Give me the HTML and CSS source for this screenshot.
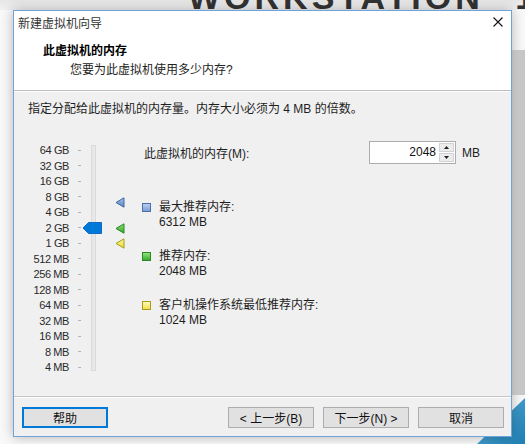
FILE: index.html
```html
<!DOCTYPE html>
<html lang="zh-CN">
<head>
<meta charset="utf-8">
<title>新建虚拟机向导</title>
<link rel="stylesheet" href="styles.css">
</head>
<body>
<div class="desk">
  <div class="brand">WORKSTATION<span class="tm">™</span> 10 <span class="pro">PRO</span></div>
  <div class="bg-right"></div>
  <div class="bg-corner"></div>

  <div class="dialog">
    <div class="titlebar">
      <span class="title">新建虚拟机向导</span>
      <svg class="close" width="10" height="10" viewBox="0 0 10 10"><path d="M0.5 0.5 L9.5 9.5 M9.5 0.5 L0.5 9.5" stroke="#111" stroke-width="1.1" fill="none"/></svg>
    </div>
    <div class="header">
      <div class="h-title">此虚拟机的内存</div>
      <div class="h-sub">您要为此虚拟机使用多少内存?</div>
    </div>
    <div class="sep"></div>
    <div class="body">
      <p class="intro">指定分配给此虚拟机的内存量。内存大小必须为 4 MB 的倍数。</p>
      <div class="main">
        <div class="scale">
          <div class="labels">
            <div class="row"><span class="lbl">64 GB</span><span class="tick"></span></div>
            <div class="row"><span class="lbl">32 GB</span><span class="tick"></span></div>
            <div class="row"><span class="lbl">16 GB</span><span class="tick"></span></div>
            <div class="row"><span class="lbl">8 GB</span><span class="tick"></span></div>
            <div class="row"><span class="lbl">4 GB</span><span class="tick"></span></div>
            <div class="row"><span class="lbl">2 GB</span><span class="tick"></span></div>
            <div class="row"><span class="lbl">1 GB</span><span class="tick"></span></div>
            <div class="row"><span class="lbl">512 MB</span><span class="tick"></span></div>
            <div class="row"><span class="lbl">256 MB</span><span class="tick"></span></div>
            <div class="row"><span class="lbl">128 MB</span><span class="tick"></span></div>
            <div class="row"><span class="lbl">64 MB</span><span class="tick"></span></div>
            <div class="row"><span class="lbl">32 MB</span><span class="tick"></span></div>
            <div class="row"><span class="lbl">16 MB</span><span class="tick"></span></div>
            <div class="row"><span class="lbl">8 MB</span><span class="tick"></span></div>
            <div class="row"><span class="lbl">4 MB</span><span class="tick"></span></div>
          </div>
          <div class="track"></div>
          <svg class="thumb" width="19" height="12" viewBox="0 0 19 12"><polygon points="0,6 5.5,0.5 18.5,0.5 18.5,11.5 5.5,11.5" fill="#0078d7" stroke="#0a6cc4" stroke-width="1"/></svg>
          <svg class="marker m-max" width="10" height="11" viewBox="0 0 10 11">
            <defs><linearGradient id="gb" x1="0" y1="0" x2="0" y2="1"><stop offset="0" stop-color="#a9c3ea"/><stop offset="1" stop-color="#5a83c4"/></linearGradient></defs>
            <polygon points="1,5.5 9,0.8 9,10.2" fill="url(#gb)" stroke="#3e66a3" stroke-width="1" stroke-linejoin="round"/>
          </svg>
          <svg class="marker m-rec" width="10" height="11" viewBox="0 0 10 11">
            <defs><linearGradient id="gg" x1="0" y1="0" x2="0" y2="1"><stop offset="0" stop-color="#8fe07a"/><stop offset="1" stop-color="#33a52a"/></linearGradient></defs>
            <polygon points="1,5.5 9,0.8 9,10.2" fill="url(#gg)" stroke="#27861f" stroke-width="1" stroke-linejoin="round"/>
          </svg>
          <svg class="marker m-min" width="10" height="11" viewBox="0 0 10 11">
            <defs><linearGradient id="gy" x1="0" y1="0" x2="0" y2="1"><stop offset="0" stop-color="#fbf7a6"/><stop offset="1" stop-color="#e7dc2c"/></linearGradient></defs>
            <polygon points="1,5.5 9,0.8 9,10.2" fill="url(#gy)" stroke="#a89c18" stroke-width="1" stroke-linejoin="round"/>
          </svg>
        </div>
        <div class="right">
          <div class="mem-row">
            <span class="mem-label">此虚拟机的内存(M):</span>
            <div class="spin">
              <span class="val">2048</span>
              <div class="spin-btns">
                <div class="sbtn"><svg width="5" height="3" viewBox="0 0 5 3"><polygon points="2.5,0 5,3 0,3" fill="#222"/></svg></div>
                <div class="sbtn"><svg width="5" height="3" viewBox="0 0 5 3"><polygon points="0,0 5,0 2.5,3" fill="#222"/></svg></div>
              </div>
            </div>
            <span class="unit">MB</span>
          </div>
          <div class="legend">
            <div class="item"><span class="sq sq-blue"></span><div class="txt"><div>最大推荐内存:</div><div>6312 MB</div></div></div>
            <div class="item"><span class="sq sq-green"></span><div class="txt"><div>推荐内存:</div><div>2048 MB</div></div></div>
            <div class="item"><span class="sq sq-yellow"></span><div class="txt"><div>客户机操作系统最低推荐内存:</div><div>1024 MB</div></div></div>
          </div>
        </div>
      </div>
    </div>
    <div class="footer">
      <div class="btn btn-help">帮助</div>
      <div class="nav">
        <div class="btn">&lt; 上一步(B)</div>
        <div class="btn">下一步(N) &gt;</div>
        <div class="btn">取消</div>
      </div>
    </div>
  </div>
</div>
</body>
</html>
```
FILE: styles.css
```css
* { box-sizing: border-box; margin: 0; padding: 0; }
html, body { width: 525px; height: 444px; overflow: hidden; }
body {
  font-family: "Liberation Sans", "Noto Sans CJK SC", sans-serif;
  font-size: 12px;
  color: #1e1e1e;
  background: #f7f7f7;
}
.desk {
  position: relative;
  width: 525px;
  height: 444px;
  overflow: hidden;
  padding: 10px 0 0 13px;
  background: linear-gradient(#e6e6e6 0, #f1f1f1 10px, #f9f9f9 10px);
}
.brand {
  position: absolute;
  top: -20px;
  left: 188px;
  font-size: 34px;
  line-height: 1;
  font-weight: bold;
  letter-spacing: 4px;
  color: #333;
  white-space: nowrap;
}
.brand .tm { font-size: 14px; vertical-align: top; }
.brand .pro { color: #49a9dc; margin-left: 8px; }
.bg-right {
  position: absolute;
  left: 512px;
  top: 50px;
  width: 13px;
  height: 345px;
  background: linear-gradient(90deg, #d8d8d8, #c6c6c6);
}
.bg-corner {
  position: absolute;
  right: 0;
  bottom: 0;
  width: 48px;
  height: 46px;
  background: linear-gradient(135deg, #5bb3df, #1f7fb4);
  clip-path: polygon(100% 0, 100% 100%, 0 100%);
}
.dialog {
  position: relative;
  width: 499px;
  height: 427px;
  border: 1px solid #6ea4da;
  background: #f0f0f0;
  display: flex;
  flex-direction: column;
  box-shadow: 0 0 12px rgba(0, 0, 0, 0.28);
}
.titlebar {
  height: 22px;
  background: #fff;
  display: flex;
  align-items: center;
  justify-content: space-between;
  padding: 0 8px 0 4px;
  color: #333;
}
.close { display: block; }
.header {
  height: 57px;
  background: #fff;
  padding: 10px 0 0 29px;
}
.h-title { font-weight: bold; line-height: 16px; color: #000; }
.h-sub { line-height: 16px; margin-top: 3px; padding-left: 27px; color: #222; }
.sep {
  height: 2px;
  border-top: 1px solid #bdbdbd;
  border-bottom: 1px solid #fdfdfd;
}
.body {
  flex: 1;
  padding: 9px 0 0 14px;
}
.intro { line-height: 16px; }
.main {
  display: flex;
  margin-top: 24px;
}
.scale {
  position: relative;
  width: 116px;
  display: flex;
  align-items: flex-start;
}
.labels { padding-top: 1.25px; }
.row {
  display: flex;
  align-items: center;
  height: 15.5px;
}
.lbl {
  width: 41px;
  text-align: right;
  font-size: 11px;
  letter-spacing: -0.4px;
  color: #2a2a2a;
  white-space: nowrap;
}
.tick {
  width: 3px;
  height: 1px;
  margin-left: 9px;
  background: #b3b3b3;
}
.track {
  margin: 4px 0 0 10px;
  width: 5px;
  height: 226px;
  background: #e8e8e8;
  border: 1px solid #dadada;
}
.thumb { position: absolute; left: 55px; top: 81px; }
.marker { position: absolute; left: 87px; }
.m-max { top: 55.5px; }
.m-rec { top: 81.5px; }
.m-min { top: 96.5px; }
.right {
  flex: 1;
  display: flex;
  flex-direction: column;
}
.mem-row {
  display: flex;
  align-items: center;
  height: 23px;
}
.mem-label { width: 225px; }
.spin {
  width: 87px;
  height: 23px;
  border: 1px solid #abadb3;
  background: #fff;
  display: flex;
}
.val {
  flex: 1;
  text-align: right;
  padding-right: 3px;
  line-height: 21px;
  color: #111;
}
.spin-btns {
  width: 16px;
  padding: 1px 1px 1px 0;
  display: flex;
  flex-direction: column;
  gap: 1px;
}
.sbtn {
  flex: 1;
  display: flex;
  align-items: center;
  justify-content: center;
  background: #ececec;
  border: 1px solid #d2d2d2;
}
.sbtn svg { display: block; }
.unit { margin-left: 6px; }
.legend {
  margin: 35.5px 0 0 -2px;
  display: flex;
  flex-direction: column;
  gap: 19px;
}
.item { display: flex; align-items: flex-start; }
.sq {
  width: 9px;
  height: 9px;
  margin-top: 3px;
  border: 1px solid;
}
.sq-blue { background: linear-gradient(#b7cdf0, #7c9fd6); border-color: #4d6fa8; }
.sq-green { background: linear-gradient(#8fe27a, #3aab2e); border-color: #2b8624; }
.sq-yellow { background: linear-gradient(#fdfab8, #eee24a); border-color: #a99c1d; }
.txt { margin-left: 8px; line-height: 15px; }
.footer {
  height: 40px;
  border-top: 1px solid #c4c4c4;
  box-shadow: inset 0 1px 0 #fdfdfd;
  padding: 10px 7px 0 8px;
  display: flex;
  justify-content: space-between;
  align-items: flex-start;
}
.nav { display: flex; gap: 9px; }
.btn {
  width: 86px;
  height: 21px;
  border: 1px solid #adadad;
  background: #e1e1e1;
  display: flex;
  align-items: center;
  justify-content: center;
  color: #111;
}
.btn-help {
  border-color: #0078d7;
  box-shadow: inset 0 0 0 1px #0078d7;
}
```
